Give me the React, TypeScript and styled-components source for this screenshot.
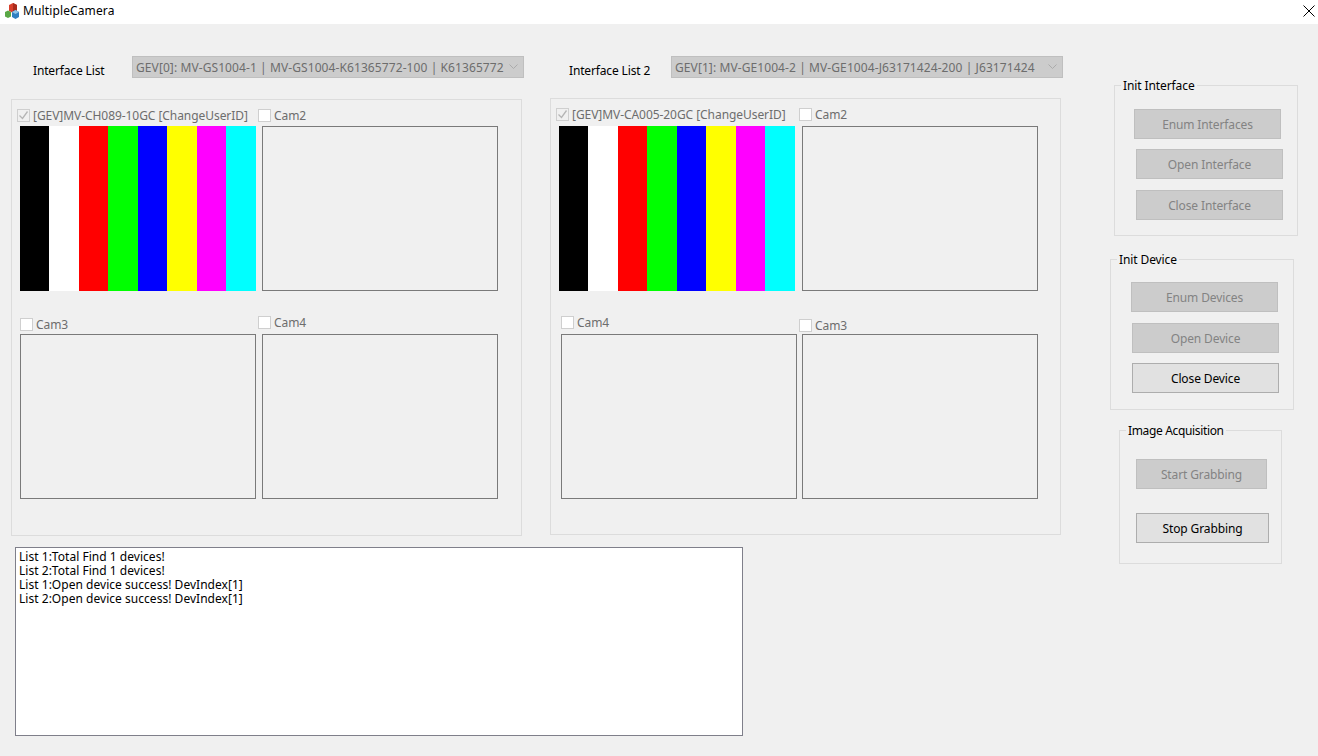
import React from 'react'
import styled, { createGlobalStyle } from 'styled-components'

const GlobalStyle = createGlobalStyle`
  html, body {
    margin: 0;
    padding: 0;
    background: #f0f0f0;
  }
  body {
    font-family: "Noto Sans", "Liberation Sans", sans-serif;
    font-size: 12px;
  }
`

const Window = styled.div`
  width: 1318px;
  height: 756px;
  overflow: hidden;
  background: #f0f0f0;
`

const TitleBar = styled.div`
  display: flex;
  align-items: center;
  height: 24px;
  padding: 0 3px 3px 4px;
  box-sizing: border-box;
  background: #fff;
`

const IconSlot = styled.span`
  display: flex;
  height: 16px;
`

const AppTitle = styled.span`
  margin-left: 3px;
  flex: 1;
  line-height: 16px;
  letter-spacing: 0.12px;
  color: #000;
`

const Body = styled.div`
  display: flex;
  align-items: flex-start;
`

const Main = styled.div`
  width: 1110px;
  padding-top: 32px;
`

const Devices = styled.div`
  display: flex;
  align-items: flex-start;
  gap: 28px;
  margin-left: 11px;
`

const DeviceSection = styled.section`
  width: 511px;
`

const ListHeader = styled.div<{ $panelGap: number }>`
  display: flex;
  align-items: flex-start;
  height: 22px;
  margin-bottom: ${({ $panelGap }) => $panelGap}px;
`

const ListLabel = styled.label<{ $left: number; $width: number }>`
  flex: none;
  width: ${({ $width }) => $width}px;
  margin-left: ${({ $left }) => $left}px;
  margin-top: 7px;
  line-height: 16px;
  letter-spacing: -0.15px;
  color: #000;
  white-space: nowrap;
`

const ListSelect = styled.div`
  flex: none;
  display: flex;
  align-items: center;
  justify-content: space-between;
  width: 392px;
  height: 22px;
  padding: 0 5px 0 3px;
  box-sizing: border-box;
  background: #cccccc;
  border: 1px solid #bfbfbf;
  letter-spacing: 0.09px;
  color: #6d6d6d;
  white-space: nowrap;
`

const Panel = styled.div`
  height: 437px;
  padding: 8px 0 0 8px;
  box-sizing: border-box;
  border: 1px solid #dcdcdc;
`

const CamRow = styled.div<{ $top?: number }>`
  display: flex;
  align-items: flex-end;
  margin-top: ${({ $top }) => $top ?? 0}px;
`

const CamCell = styled.div<{ $left: number }>`
  width: 236px;
  margin-left: ${({ $left }) => $left}px;
`

const CamCheck = styled.label<{ $left?: number; $gap: number }>`
  display: flex;
  align-items: center;
  height: 14px;
  margin-left: ${({ $left }) => $left ?? 0}px;
  margin-bottom: ${({ $gap }) => $gap}px;
  letter-spacing: -0.06px;
  color: #6d6d6d;
  white-space: nowrap;
`

const CheckBox = styled.span`
  flex: none;
  display: flex;
  width: 13px;
  height: 13px;
  margin-right: 3px;
  box-sizing: border-box;
  background: #fff;
  border: 1px solid #cfcfcf;
`

const CheckBoxChecked = styled(CheckBox)`
  background: #f0f0f0;
`

const CamView = styled.div`
  height: 165px;
  box-sizing: border-box;
  border: 1px solid #7a7a7a;
  background: #f0f0f0;
`

const ColorBars = styled.div`
  display: grid;
  grid-template-columns: repeat(4, 29px 30px);
  height: 165px;
`

const Bar = styled.div<{ $color: string }>`
  background: ${({ $color }) => $color};
`

const LogBox = styled.div`
  width: 728px;
  height: 189px;
  margin: 11px 0 0 15px;
  padding: 2px 3px;
  box-sizing: border-box;
  border: 1px solid #7f7f8a;
  background: #fff;
  color: #000;
  line-height: 14px;
  letter-spacing: 0.03px;
`

const Side = styled.aside`
  padding-top: 61px;
`

const Group = styled.div<{ $left: number; $top: number; $width: number; $height: number }>`
  position: relative;
  width: ${({ $width }) => $width}px;
  height: ${({ $height }) => $height}px;
  margin-left: ${({ $left }) => $left}px;
  margin-top: ${({ $top }) => $top}px;
  box-sizing: border-box;
  border: 1px solid #dcdcdc;
`

const GroupTitle = styled.span<{ $left: number; $spacing?: number }>`
  position: absolute;
  top: -7px;
  left: ${({ $left }) => $left}px;
  padding: 0 2px;
  line-height: 14px;
  letter-spacing: ${({ $spacing }) => $spacing ?? -0.1}px;
  background: #f0f0f0;
  color: #000;
  white-space: nowrap;
`

const GroupButtons = styled.div<{ $pad: number }>`
  display: flex;
  flex-direction: column;
  align-items: flex-start;
  padding-top: ${({ $pad }) => $pad}px;
`

const ActionButton = styled.button<{ $left: number; $top?: number; $width?: number }>`
  display: block;
  width: ${({ $width }) => $width ?? 147}px;
  height: 30px;
  margin: ${({ $top }) => $top ?? 0}px 0 0 ${({ $left }) => $left}px;
  padding: 0;
  font: inherit;
  letter-spacing: -0.12px;
  background: #e1e1e1;
  border: 1px solid #adadad;
  color: #000;

  &:disabled {
    background: #cccccc;
    border-color: #bfbfbf;
    color: #838383;
  }
`

const BAR_COLORS = ['#000000', '#ffffff', '#ff0000', '#00ff00', '#0000ff', '#ffff00', '#ff00ff', '#00ffff']

const AppIcon = () => (
  <IconSlot>
    <svg width="16" height="16" viewBox="0 0 16 16">
      <path d="M5 2l4-2 4 2v6l-4 2-4-2z" fill="#d8402c" />
      <path d="M9 0l4 2v6l-4 2z" fill="#a92c1d" />
      <path d="M1 9l3-1.500 3 1.500v4.500l-3 1.500-3-1.500z" fill="#5aa746" />
      <path d="M8 9l3.500-2 3.500 2v5l-3.500 2-3.500-2z" fill="#2f7fc1" />
      <path d="M8 9l3.500-2 3.500 2-3.500 2z" fill="#8cc3e8" />
    </svg>
  </IconSlot>
)

const CloseIcon = () => (
  <IconSlot>
    <svg width="12" height="16" viewBox="0 0 12 16">
      <path d="M.5 2.500l11 11M11.500 2.500l-11 11" stroke="#000" strokeWidth="1" fill="none" />
    </svg>
  </IconSlot>
)

const Chevron = () => (
  <svg width="9" height="6" viewBox="0 0 9 6">
    <path d="M.5.5l4 4 4-4" stroke="#ababab" strokeWidth="1" fill="none" />
  </svg>
)

const CheckMark = () => (
  <svg width="11" height="11" viewBox="0 0 11 11">
    <path d="M1.500 5.500l3 3 5-7" stroke="#b5b5b5" strokeWidth="1.300" fill="none" />
  </svg>
)

const Bars = () => (
  <ColorBars>
    {BAR_COLORS.map((color) => (
      <Bar key={color} $color={color} />
    ))}
  </ColorBars>
)

export default function App() {
  return (
    <Window>
      <GlobalStyle />
      <TitleBar>
        <AppIcon />
        <AppTitle>MultipleCamera</AppTitle>
        <CloseIcon />
      </TitleBar>
      <Body>
        <Main>
          <Devices>
            <DeviceSection>
              <ListHeader $panelGap={21}>
                <ListLabel $left={22} $width={99}>Interface List</ListLabel>
                <ListSelect>
                  GEV[0]: MV-GS1004-1 | MV-GS1004-K61365772-100 | K61365772
                  <Chevron />
                </ListSelect>
              </ListHeader>
              <Panel>
                <CamRow>
                  <CamCell $left={0}>
                    <CamCheck $left={-3} $gap={4}>
                      <CheckBoxChecked><CheckMark /></CheckBoxChecked>
                      [GEV]MV-CH089-10GC [ChangeUserID]
                    </CamCheck>
                    <Bars />
                  </CamCell>
                  <CamCell $left={6}>
                    <CamCheck $left={-4} $gap={4}><CheckBox />Cam2</CamCheck>
                    <CamView />
                  </CamCell>
                </CamRow>
                <CamRow $top={24}>
                  <CamCell $left={0}>
                    <CamCheck $gap={3}><CheckBox />Cam3</CamCheck>
                    <CamView />
                  </CamCell>
                  <CamCell $left={6}>
                    <CamCheck $left={-4} $gap={5}><CheckBox />Cam4</CamCheck>
                    <CamView />
                  </CamCell>
                </CamRow>
              </Panel>
            </DeviceSection>
            <DeviceSection>
              <ListHeader $panelGap={20}>
                <ListLabel $left={19} $width={102}>Interface List 2</ListLabel>
                <ListSelect>
                  GEV[1]: MV-GE1004-2 | MV-GE1004-J63171424-200 | J63171424
                  <Chevron />
                </ListSelect>
              </ListHeader>
              <Panel>
                <CamRow>
                  <CamCell $left={0}>
                    <CamCheck $left={-3} $gap={5}>
                      <CheckBoxChecked><CheckMark /></CheckBoxChecked>
                      [GEV]MV-CA005-20GC [ChangeUserID]
                    </CamCheck>
                    <Bars />
                  </CamCell>
                  <CamCell $left={7}>
                    <CamCheck $left={-3} $gap={5}><CheckBox />Cam2</CamCheck>
                    <CamView />
                  </CamCell>
                </CamRow>
                <CamRow $top={24}>
                  <CamCell $left={2}>
                    <CamCheck $gap={5}><CheckBox />Cam4</CamCheck>
                    <CamView />
                  </CamCell>
                  <CamCell $left={5}>
                    <CamCheck $left={-3} $gap={2}><CheckBox />Cam3</CamCheck>
                    <CamView />
                  </CamCell>
                </CamRow>
              </Panel>
            </DeviceSection>
          </Devices>
          <LogBox>
            <div>List 1:Total Find 1 devices!</div>
            <div>List 2:Total Find 1 devices!</div>
            <div>List 1:Open device success! DevIndex[1]</div>
            <div>List 2:Open device success! DevIndex[1]</div>
          </LogBox>
        </Main>
        <Side>
          <Group $left={4} $top={0} $width={184} $height={151}>
            <GroupTitle $left={6}>Init Interface</GroupTitle>
            <GroupButtons $pad={23}>
              <ActionButton $left={19} disabled>Enum Interfaces</ActionButton>
              <ActionButton $left={21} $top={10} disabled>Open Interface</ActionButton>
              <ActionButton $left={21} $top={11} disabled>Close Interface</ActionButton>
            </GroupButtons>
          </Group>
          <Group $left={0} $top={23} $width={184} $height={151}>
            <GroupTitle $left={6}>Init Device</GroupTitle>
            <GroupButtons $pad={22}>
              <ActionButton $left={20} disabled>Enum Devices</ActionButton>
              <ActionButton $left={21} $top={11} disabled>Open Device</ActionButton>
              <ActionButton $left={21} $top={10}>Close Device</ActionButton>
            </GroupButtons>
          </Group>
          <Group $left={9} $top={20} $width={163} $height={134}>
            <GroupTitle $left={6} $spacing={-0.35}>Image Acquisition</GroupTitle>
            <GroupButtons $pad={28}>
              <ActionButton $left={16} $width={131} disabled>Start Grabbing</ActionButton>
              <ActionButton $left={16} $top={24} $width={133}>Stop Grabbing</ActionButton>
            </GroupButtons>
          </Group>
        </Side>
      </Body>
    </Window>
  )
}
